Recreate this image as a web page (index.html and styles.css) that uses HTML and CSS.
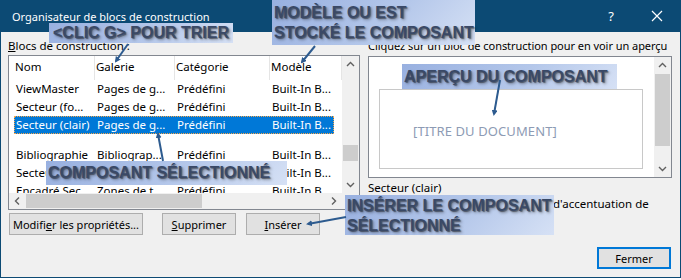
FILE: index.html
```html
<!DOCTYPE html>
<html lang="fr">
<head>
<meta charset="utf-8">
<title>Organisateur de blocs de construction</title>
<link rel="stylesheet" href="styles.css">
</head>
<body>
<div class="win">
  <div class="titlebar">
    <span class="title">Organisateur de blocs de construction</span>
    <span class="tb-btn">?</span>
    <span class="tb-btn">
      <svg width="12" height="12" viewBox="0 0 12 12"><path d="M1 1 L11 11 M11 1 L1 11" stroke="#fff" stroke-width="1.2"/></svg>
    </span>
  </div>
  <div class="content">
    <div class="left">
      <div class="lbl"><u>B</u>locs de construction :</div>
      <div class="list">
        <div class="list-main">
          <div class="rows">
            <div class="row head"><span>Nom</span><span>Galerie</span><span>Catégorie</span><span>Modèle</span></div>
            <div class="row"><span>ViewMaster</span><span>Pages de g...</span><span>Prédéfini</span><span>Built-In B...</span></div>
            <div class="row"><span>Secteur (fo...</span><span>Pages de g...</span><span>Prédéfini</span><span>Built-In B...</span></div>
            <div class="row sel"><span>Secteur (clair)</span><span>Pages de g...</span><span>Prédéfini</span><span>Built-In B...</span></div>
            <div class="row gap"><span>Bibliographie</span><span>Bibliograp...</span><span>Prédéfini</span><span>Built-In B...</span></div>
            <div class="row"><span>Secteur</span><span>Pages de g...</span><span>Prédéfini</span><span>Built-In B...</span></div>
            <div class="row"><span>Encadré Sec...</span><span>Zones de t...</span><span>Prédéfini</span><span>Built-In B...</span></div>
          </div>
          <div class="vscroll">
            <svg class="arr" width="17" height="17" viewBox="0 0 17 17"><path d="M5 10 L8.5 6.5 L12 10" fill="none" stroke="#606060" stroke-width="1.4"/></svg>
            <div class="vtrack"><div class="vthumb list-thumb"></div></div>
            <svg class="arr" width="17" height="17" viewBox="0 0 17 17"><path d="M5 7 L8.5 10.5 L12 7" fill="none" stroke="#606060" stroke-width="1.4"/></svg>
          </div>
        </div>
        <div class="hscroll">
          <svg width="17" height="16" viewBox="0 0 17 16"><path d="M10 4.5 L6.5 8 L10 11.5" fill="none" stroke="#606060" stroke-width="1.4"/></svg>
          <div class="htrack"><div class="hthumb"></div></div>
          <svg width="17" height="16" viewBox="0 0 17 16"><path d="M7 4.5 L10.5 8 L7 11.5" fill="none" stroke="#606060" stroke-width="1.4"/></svg>
          <div class="corner"></div>
        </div>
      </div>
      <div class="btns">
        <div class="btn w-mod">Modifi<u>e</u>r les propriétés...</div>
        <div class="btn w-sup"><u>S</u>upprimer</div>
        <div class="btn w-ins"><u>I</u>nsérer</div>
      </div>
    </div>
    <div class="right">
      <div class="lbl rlbl">Cliquez sur un bloc de construction pour en voir un aperçu</div>
      <div class="preview">
        <div class="page">
          <div class="pageframe"><span class="doctitle">[TITRE DU DOCUMENT]</span></div>
        </div>
        <div class="vscroll">
          <svg class="arr" width="17" height="17" viewBox="0 0 17 17"><path d="M5 10 L8.5 6.5 L12 10" fill="none" stroke="#606060" stroke-width="1.4"/></svg>
          <div class="vtrack"><div class="vthumb prev-thumb"></div></div>
          <svg class="arr" width="17" height="17" viewBox="0 0 17 17"><path d="M5 7 L8.5 10.5 L12 7" fill="none" stroke="#606060" stroke-width="1.4"/></svg>
        </div>
      </div>
      <div class="name">Secteur (clair)</div>
      <div class="desc"><span class="pre">Page de garde avec un bloc</span>d'accentuation de</div>
      <div class="desc">couleur</div>
      <div class="foot"><div class="btn fermer">Fermer</div></div>
    </div>
  </div>

  <div class="callout c1">&lt;CLIC G&gt; POUR TRIER</div>
  <div class="callout c2">MODÈLE OU EST<br>STOCKÉ LE COMPOSANT</div>
  <div class="callout c3">APERÇU DU COMPOSANT</div>
  <div class="callout c4">COMPOSANT SÉLECTIONNÉ</div>
  <div class="callout c5">INSÉRER LE COMPOSANT<br>SÉLECTIONNÉ</div>

  <svg class="arrows" width="681" height="280" viewBox="0 0 681 280">
    <defs>
      <marker id="ah" markerWidth="6" markerHeight="6" refX="4" refY="3" orient="auto" markerUnits="userSpaceOnUse">
        <path d="M0 0 L6 3 L0 6 Z" fill="#2d5b8f"/>
      </marker>
    </defs>
    <g stroke="#2d5b8f" stroke-width="2" fill="none" marker-end="url(#ah)">
      <line x1="128" y1="44" x2="116" y2="61"/>
      <line x1="315" y1="46" x2="302" y2="62"/>
      <line x1="500" y1="80" x2="494" y2="114"/>
      <line x1="163" y1="161" x2="158" y2="134"/>
      <line x1="346" y1="217" x2="308" y2="224"/>
    </g>
  </svg>
</div>
</body>
</html>
```
FILE: styles.css
```css
* { box-sizing: border-box; }
html, body { margin: 0; padding: 0; background: #ffffff; }
body { font-family: "Segoe UI", "Noto Sans", "Open Sans", sans-serif; font-size: 11.5px; color: #000; }

.win {
  position: relative;
  width: 681px;
  height: 278px;
  background: #f0f0f0;
  border: 1px solid #0c4a74;
  border-top: none;
  display: flex;
  flex-direction: column;
}

.titlebar {
  height: 32px;
  background: #0c4a74;
  color: #fff;
  display: flex;
  align-items: center;
  padding-left: 11px;
  font-size: 11px;
}
.title { flex: 1; }
.tb-btn {
  width: 46px;
  height: 32px;
  display: flex;
  align-items: center;
  justify-content: center;
  font-size: 13px;
}

.content {
  display: flex;
  gap: 8px;
  padding: 6px 7px 0 7px;
  flex: 1;
}

.lbl { height: 16px; line-height: 16px; white-space: nowrap; }
.rlbl { font-size: 11px; letter-spacing: -0.05px; }

.left { width: 352px; display: flex; flex-direction: column; }
.list {
  margin-top: 1px;
  height: 155px;
  border: 1px solid #828790;
  background: #fff;
  display: flex;
  flex-direction: column;
}
.list-main { flex: 1; display: flex; min-height: 0; }
.rows { flex: 1; overflow: hidden; padding-left: 5px; }
.row {
  display: grid;
  grid-template-columns: 81px 80px 95px 72px;
  height: 18px;
  line-height: 18px;
  white-space: nowrap;
}
.row span { padding-left: 2px; overflow: hidden; }
.row.head { height: 24px; line-height: 22px; }
.row.head span { padding-left: 1px; border-right: 1px solid #e5e5e5; }
.row.sel {
  background: #0078d7;
  color: #fff;
  outline: 1px dotted #f7a64a;
  outline-offset: -1px;
  margin-right: 8px;
}
.row.gap { margin-top: 12px; }

.vscroll {
  width: 17px;
  background: #f0f0f0;
  display: flex;
  flex-direction: column;
}
.vscroll .arr { display: block; flex: none; }
.vtrack { flex: 1; }
.vthumb { background: #cdcdcd; margin: 0 1px; }
.list-thumb { margin-top: 72px; height: 16px; }
.prev-thumb { margin-top: 0; height: 72px; }

.hscroll {
  height: 16px;
  background: #f0f0f0;
  display: flex;
}
.hscroll svg { flex: none; display: block; }
.htrack { flex: 1; }
.hthumb { width: 176px; height: 14px; margin-top: 1px; background: #cdcdcd; }
.corner { width: 17px; background: #f0f0f0; }

.btns { display: flex; margin-top: 3px; font-size: 11px; }
.btn {
  height: 22px;
  background: #e1e1e1;
  border: 1px solid #adadad;
  display: flex;
  align-items: center;
  justify-content: center;
  white-space: nowrap;
}
.w-mod { width: 134px; margin-left: 1px; }
.w-sup { width: 74px; margin-left: 19px; }
.w-ins { width: 74px; margin-left: 10px; }

.right { width: 304px; display: flex; flex-direction: column; }
.preview {
  margin-top: 2px;
  height: 122px;
  border: 1px solid #828790;
  background: #fff;
  display: flex;
}
.page { flex: 1; padding: 32px 11px 8px 10px; }
.pageframe {
  height: 80px;
  border: 1px solid #c8c8c8;
  padding: 32px 0 0 33px;
}
.doctitle { color: #8d9bb4; font-size: 13px; letter-spacing: 0.1px; }

.name { margin-top: 2px; height: 16px; line-height: 16px; }
.desc { height: 16px; line-height: 16px; white-space: nowrap; overflow: hidden; }
.pre { display: inline-block; width: 185px; overflow: hidden; vertical-align: top; }
.foot { display: flex; justify-content: flex-end; margin-top: 19px; font-size: 11px; }
.fermer {
  width: 74px;
  height: 22px;
  border: 2px solid #0078d7;
  margin-right: 1px;
}

.callout {
  position: absolute;
  font-family: "Liberation Sans", Arial, sans-serif;
  font-weight: bold;
  font-size: 16px;
  line-height: 20px;
  color: #3a4966;
  text-shadow: 1px 1px 1px rgba(0, 0, 0, 0.45), 2px 2px 3px rgba(0, 0, 0, 0.35);
  background: linear-gradient(135deg, #98b0e0 0%, #b4c7ea 55%, #d6e1f5 100%);
  white-space: nowrap;
  padding: 0 3px;
}
.c1 { left: 48px; top: 23px; width: 184px; height: 20px; line-height: 20px; padding-left: 4px; }
.c2 { left: 271px; top: 0px; width: 203px; height: 45px; padding-top: 3px; padding-left: 2px; }
.c3 { left: 401px; top: 64px; width: 215px; height: 25px; line-height: 25px; padding-left: 2px; }
.c4 { left: 45px; top: 161px; width: 241px; height: 24px; line-height: 24px; padding-left: 2px; }
.c5 { left: 344px; top: 195px; width: 209px; height: 40px; padding-top: 1px; padding-left: 2px; }

.arrows { position: absolute; left: -1px; top: 0; pointer-events: none; }
```
